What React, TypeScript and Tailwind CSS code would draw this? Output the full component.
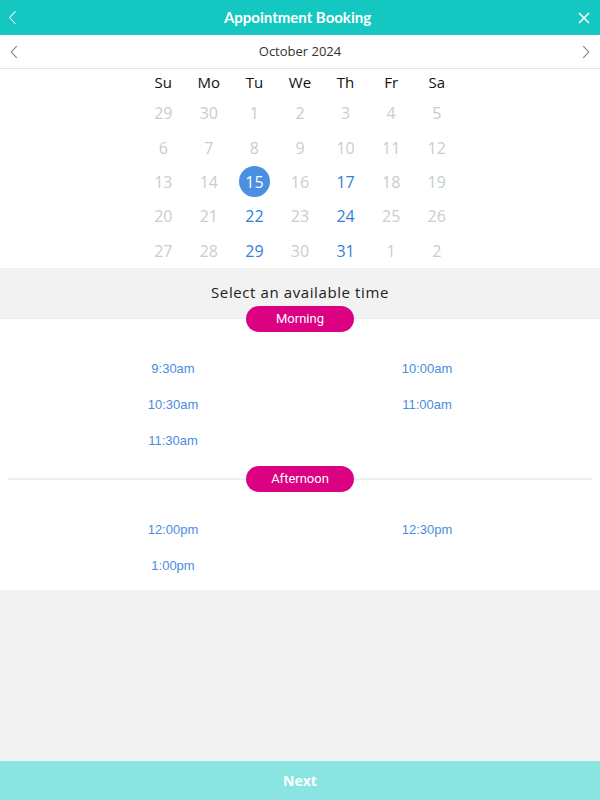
import React from "react";

const DAYS = ["Su", "Mo", "Tu", "We", "Th", "Fr", "Sa"];

type Cell = { n: number; kind: "off" | "open" | "selected" };

const WEEKS: Cell[][] = [
  [29, 30, 1, 2, 3, 4, 5],
  [6, 7, 8, 9, 10, 11, 12],
  [13, 14, 15, 16, 17, 18, 19],
  [20, 21, 22, 23, 24, 25, 26],
  [27, 28, 29, 30, 31, 1, 2],
].map((week, w) =>
  week.map((n, d) => {
    if (w === 2 && n === 15) return { n, kind: "selected" as const };
    const open = (w >= 2 && w <= 4 && (d === 2 || d === 4)) && !(w === 2 && d === 2);
    return { n, kind: open ? ("open" as const) : ("off" as const) };
  }),
);

const MORNING = ["9:30am", "10:00am", "10:30am", "11:00am", "11:30am"];
const AFTERNOON = ["12:00pm", "12:30pm", "1:00pm"];

const Chevron = ({ dir, className }: { dir: "left" | "right"; className: string }) => (
  <svg viewBox="0 0 10 18" fill="none" stroke="currentColor" strokeWidth="1.3" className={className} aria-hidden>
    {dir === "left" ? <path d="M8.5 1.5L1.5 9l7 7.5" /> : <path d="M1.5 1.5L8.5 9l-7 7.5" />}
  </svg>
);

const Pill = ({ label }: { label: string }) => (
  <div className="flex h-[26px] w-[108px] shrink-0 items-center justify-center rounded-full bg-[#dc0083] text-[13px] text-white [font-family:Roboto,sans-serif]">
    {label}
  </div>
);

function Slots({ times }: { times: string[] }) {
  return (
    <div className="grid grid-cols-2 px-[46px]">
      {times.map((t) => (
        <button
          key={t}
          type="button"
          className="flex h-[36px] items-center justify-center text-[13px] text-[#4a8de0] [font-family:'Liberation_Sans',Arial,sans-serif]"
        >
          {t}
        </button>
      ))}
    </div>
  );
}

export default function App() {
  return (
    <div className="flex h-[800px] flex-col bg-[#f2f2f2] [font-family:'Open_Sans',sans-serif]">
      <header className="flex h-[35px] shrink-0 items-center justify-between bg-[#14c8c1] px-[8px] text-white">
        <Chevron dir="left" className="h-[15px] w-[9px]" />
        <h1 className="text-[15px] font-bold [font-family:Lato,'Open_Sans',sans-serif]">Appointment Booking</h1>
        <svg viewBox="0 0 12 12" stroke="currentColor" strokeWidth="1.5" className="mr-[2px] h-[12px] w-[12px]" aria-hidden>
          <path d="M1 1l10 10M11 1L1 11" />
        </svg>
      </header>

      <div className="flex h-[34px] shrink-0 items-center justify-between border-b border-[#e6e6e6] bg-white px-[10px] text-[#777]">
        <Chevron dir="left" className="h-[14px] w-[8px]" />
        <span className="text-[13px] text-[#333]">October 2024</span>
        <Chevron dir="right" className="h-[14px] w-[8px]" />
      </div>

      <div className="flex shrink-0 justify-center bg-white">
        <div className="w-[319px]">
          <div className="grid h-[27px] grid-cols-7 items-center text-center text-[15px] text-[#111]">
            {DAYS.map((d) => (
              <span key={d}>{d}</span>
            ))}
          </div>
          {WEEKS.map((week, i) => (
            <div key={i} className="grid h-[34.4px] grid-cols-7 items-center text-center text-[16px]">
              {week.map((c, j) => (
                <div key={j} className="flex justify-center">
                  {c.kind === "selected" ? (
                    <span className="flex h-[31px] w-[31px] items-center justify-center rounded-full bg-[#4a8fe0] text-white">
                      {c.n}
                    </span>
                  ) : (
                    <span className={c.kind === "open" ? "text-[#2f7fdc]" : "text-[#c8cdd1]"}>{c.n}</span>
                  )}
                </div>
              ))}
            </div>
          ))}
        </div>
      </div>

      <div className="flex h-[50px] shrink-0 items-center justify-center pb-[1px] text-[15px] tracking-[0.6px] text-[#222]">
        Select an available time
      </div>

      <section className="shrink-0 border-t border-[#e8ebee] bg-white pb-[6px]">
        <div className="-mt-[13px] flex justify-center">
          <Pill label="Morning" />
        </div>
        <div className="mt-[19px]">
          <Slots times={MORNING} />
        </div>
        <div className="mt-[7px] flex items-center px-[8px]">
          <div className="h-[2px] flex-1 bg-[#eceff2]" />
          <Pill label="Afternoon" />
          <div className="h-[2px] flex-1 bg-[#eceff2]" />
        </div>
        <div className="mt-[20px]">
          <Slots times={AFTERNOON} />
        </div>
      </section>

      <button
        type="button"
        className="mt-auto flex h-[39px] shrink-0 items-center justify-center bg-[#8ae4e1] text-[14px] font-bold text-white"
      >
        Next
      </button>
    </div>
  );
}
